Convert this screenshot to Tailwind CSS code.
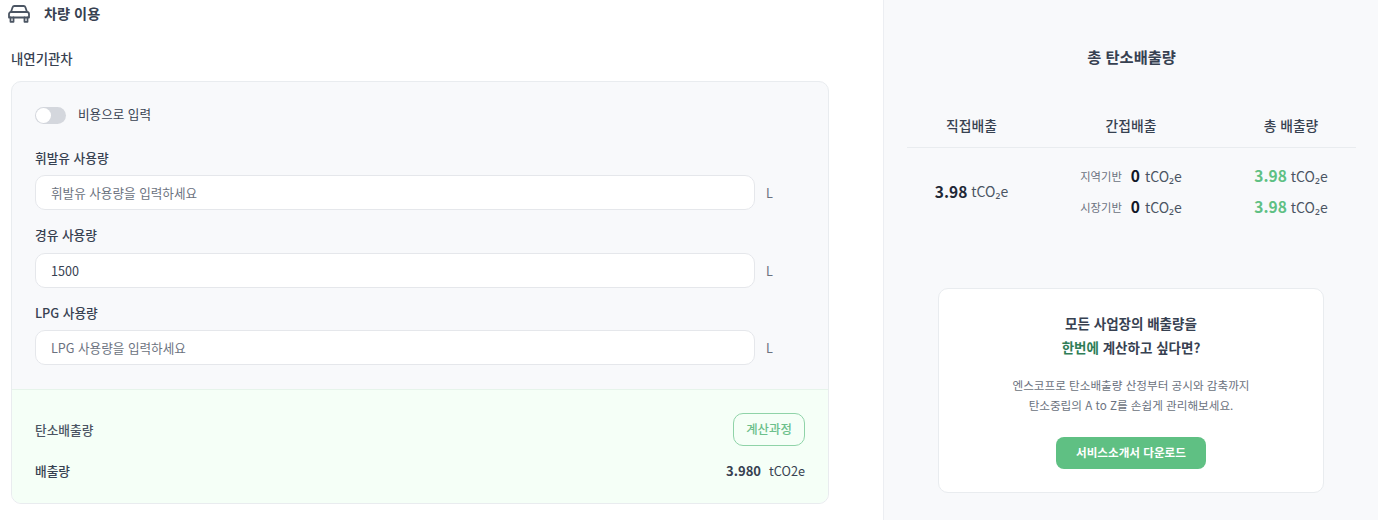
<!DOCTYPE html>
<html lang="ko">
<head>
  <meta charset="UTF-8" />
  <title>차량 이용</title>
  <script src="https://cdn.jsdelivr.net/npm/@tailwindcss/browser@4"></script>
</head>
<body class="bg-white font-['Noto_Sans_CJK_KR','Noto_Sans',sans-serif] text-[#374151]">
  <div class="flex h-[520px] w-[1378px] overflow-hidden">
    <main class="w-[883px] shrink-0 pl-[11px]">
      <div class="flex h-[27px] items-center">
        <svg class="-ml-[3px] h-[18px] w-[22px] text-[#4b5563]" viewBox="0 0 22 18" fill="none" stroke="currentColor" stroke-width="1.800" stroke-linecap="round" stroke-linejoin="round">
          <path d="M3 7L4.600 2.200A1.800 1.800 0 0 1 6.300 1H15.700A1.800 1.800 0 0 1 17.400 2.200L19 7" />
          <path d="M3 7H19A2 2 0 0 1 21 9V12.500H1V9A2 2 0 0 1 3 7Z" />
          <path d="M2.500 12.500V16.800H5.500V12.500M16.500 12.500V16.800H19.500V12.500" />
        </svg>
        <h2 class="ml-[14px] text-[14.200px] font-bold text-[#374151]">차량 이용</h2>
      </div>
      <h3 class="mt-[21px] text-[13.400px] leading-[20px] font-medium text-[#374151]">내연기관차</h3>
      <section class="mt-[13px] w-[818px] overflow-hidden rounded-[10px] border border-[#e9ecef] bg-[#f8f9fb]">
        <div class="px-[23px] pt-[24px] pb-[24px]">
          <div class="flex h-[18px] items-center">
            <span class="relative h-[17px] w-[31px] rounded-full bg-[#d4d7dd]">
              <span class="absolute top-[1px] left-[1px] h-[15px] w-[15px] rounded-full bg-white"></span>
            </span>
            <span class="mb-[2px] ml-[12px] text-[12.600px] text-[#374151]">비용으로 입력</span>
          </div>
          <label class="mt-[25px] block text-[12.700px] leading-[18px] font-medium">휘발유 사용량</label>
          <div class="mt-[8px] flex items-center">
            <input class="h-[35px] w-[720px] rounded-[10px] border border-[#e5e7eb] bg-white px-[15px] text-[12.600px] text-[#374151] placeholder:text-[#6b7280]" placeholder="휘발유 사용량을 입력하세요" />
            <span class="mt-[1px] ml-[11px] text-[12.600px] text-[#6b7280]">L</span>
          </div>
          <label class="mt-[16px] block text-[12.700px] leading-[18px] font-medium">경유 사용량</label>
          <div class="mt-[9px] flex items-center">
            <input class="h-[35px] w-[720px] rounded-[10px] border border-[#e5e7eb] bg-white px-[15px] text-[12.600px] text-[#374151] placeholder:text-[#6b7280]" value="1500" />
            <span class="mt-[1px] ml-[11px] text-[12.600px] text-[#6b7280]">L</span>
          </div>
          <label class="mt-[16px] block text-[12.700px] leading-[18px] font-medium">LPG 사용량</label>
          <div class="mt-[8px] flex items-center">
            <input class="h-[35px] w-[720px] rounded-[10px] border border-[#e5e7eb] bg-white px-[15px] text-[12.600px] text-[#374151] placeholder:text-[#6b7280]" placeholder="LPG 사용량을 입력하세요" />
            <span class="mt-[1px] ml-[11px] text-[12.600px] text-[#6b7280]">L</span>
          </div>
        </div>
        <div class="h-[114px] border-t border-[#e6f4ea] bg-[#f5fff7] px-[23px] pt-[23px]">
          <div class="flex items-center justify-between">
            <span class="text-[12.700px] font-medium text-[#4b5563]">탄소배출량</span>
            <button class="h-[33px] w-[72px] rounded-[10px] border-[1.500px] border-[#8fd3a8] text-[12.400px] font-medium text-[#6cc08b]">계산과정</button>
          </div>
          <div class="mt-[15px] flex items-center justify-between">
            <span class="text-[12.700px] font-medium text-[#374151]">배출량</span>
            <span class="text-[12.700px] text-[#374151]"><b class="text-[13px] font-bold">3.980</b><span class="ml-[8px]">tCO2e</span></span>
          </div>
        </div>
      </section>
    </main>

    <aside class="flex-1 border-l border-[#eceef2] bg-[#f8f9fb]">
      <h2 class="mt-[45px] text-center text-[15.300px] leading-[22px] font-bold text-[#374151]">총 탄소배출량</h2>
      <div class="mx-[23px] mt-[48px]">
        <div class="grid h-[33px] grid-cols-[129px_190px_130px] border-b border-[#e9ecef] pb-[11px] text-center text-[13.800px] leading-[20px] font-medium text-[#374151]">
          <span>직접배출</span><span>간접배출</span><span>총 배출량</span>
        </div>
        <div class="grid grid-cols-[129px_190px_130px] pt-[17px] text-[14px] text-[#4b5563]">
          <div class="flex items-center justify-center"><b class="mr-[4px] text-[15.500px] font-bold text-[#1f2937]">3.98</b> tCO₂e</div>
          <div class="flex flex-col items-center gap-[9px]">
            <div class="flex h-[22px] items-center"><span class="mr-[9px] text-[11.300px] text-[#6b7280]">지역기반</span><b class="mr-[5px] text-[15.500px] font-bold text-[#111827]">0</b> tCO₂e</div>
            <div class="flex h-[22px] items-center"><span class="mr-[9px] text-[11.300px] text-[#6b7280]">시장기반</span><b class="mr-[5px] text-[15.500px] font-bold text-[#111827]">0</b> tCO₂e</div>
          </div>
          <div class="flex flex-col items-center gap-[9px]">
            <div class="flex h-[22px] items-center"><b class="mr-[4px] text-[15.500px] font-bold text-[#5fc083]">3.98</b> tCO₂e</div>
            <div class="flex h-[22px] items-center"><b class="mr-[4px] text-[15.500px] font-bold text-[#5fc083]">3.98</b> tCO₂e</div>
          </div>
        </div>
      </div>
      <div class="mt-[70px] ml-[54px] flex h-[205px] w-[386px] flex-col items-center rounded-[10px] border border-[#e9ecef] bg-white pt-[23px]">
        <p class="text-[13.500px] leading-[23px] font-bold text-[#374151]">모든 사업장의 배출량을</p>
        <p class="mt-[1px] text-[13.500px] leading-[23px] font-bold text-[#374151]"><span class="text-[#2f7d57]">한번에</span> 계산하고 싶다면?</p>
        <p class="mt-[16px] text-[11.600px] leading-[20px] text-[#6b7280]">엔스코프로 탄소배출량 산정부터 공시와 감축까지</p>
        <p class="text-[11.600px] leading-[20px] text-[#6b7280]">탄소중립의 A to Z를 손쉽게 관리해보세요.</p>
        <button class="mt-[22px] h-[32px] w-[150px] rounded-[8px] bg-[#5fc083] text-[11.600px] font-bold text-white">서비스소개서 다운로드</button>
      </div>
    </aside>
  </div>
</body>
</html>
